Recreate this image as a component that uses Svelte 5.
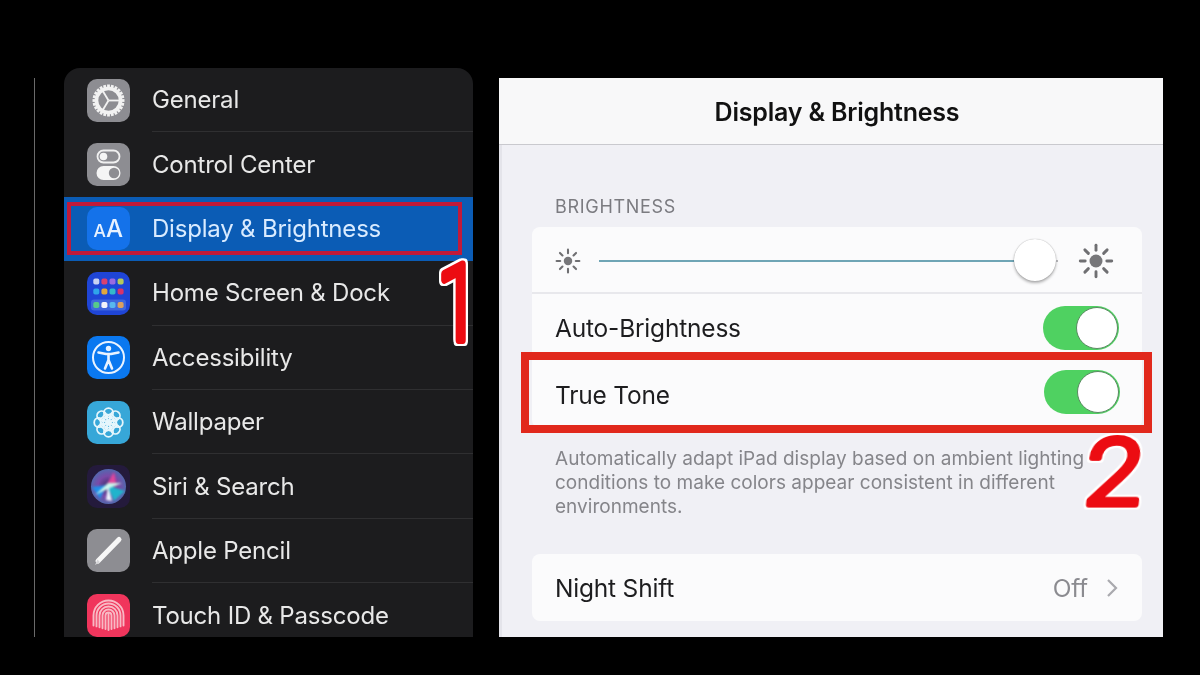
<script>
  const rows = [
    { key: 'general', label: 'General' },
    { key: 'control', label: 'Control Center' },
    { key: 'display', label: 'Display & Brightness', active: true },
    { key: 'home', label: 'Home Screen & Dock' },
    { key: 'access', label: 'Accessibility' },
    { key: 'wallpaper', label: 'Wallpaper' },
    { key: 'siri', label: 'Siri & Search' },
    { key: 'pencil', label: 'Apple Pencil' },
    { key: 'touch', label: 'Touch ID & Passcode' }
  ];
  const teeth = Array.from({ length: 24 }, (_, i) => i * 15);
  const homeDots = [
    ['#c9d2f2', '#d8416f', '#9a6be0', '#b5c95a'],
    ['#2fa4ea', '#e0a63c', '#35b9c9', '#d8336a'],
    ['#57c98a', '#f2f4fa', '#58b7ee', '#dca05f']
  ];
  const homeY = [6.6, 16.6, 30];
  const petals = [0, 45, 90, 135, 180, 225, 270, 315];
  const rays = [0, 45, 90, 135, 180, 225, 270, 315];
  const prints = [3, 6, 9, 12, 15];
</script>

{#snippet sun(size, core)}
  <svg class="sun" width={size} height={size} viewBox="0 0 40 40">
    <circle cx="20" cy="20" r={core} fill="#77777a" />
    {#each rays as r}
      <line x1="20" y1="2.5" x2="20" y2="8" stroke="#6f6f72" stroke-width="3.2" stroke-linecap="round" transform="rotate({r} 20 20)" />
    {/each}
  </svg>
{/snippet}

{#snippet toggle(lifted)}
  <span class="toggle" class:lifted><span class="knob"></span></span>
{/snippet}

{#snippet icon(key)}
  <svg class="icon" viewBox="0 0 43 43" width="43" height="43">
    {#if key === 'general'}
      <rect width="43" height="43" rx="10" fill="#8d8d92" />
      {#each teeth as t}
        <rect x="20.1" y="5.5" width="2.8" height="5" fill="#f2f2f2" transform="rotate({t} 21.5 21.5)" />
      {/each}
      <circle cx="21.5" cy="21.5" r="12" fill="none" stroke="#f2f2f2" stroke-width="3.6" />
      <g stroke="#f2f2f2" stroke-width="1.8">
        <line x1="21.5" y1="21.5" x2="33" y2="21.5" />
        <line x1="21.5" y1="21.5" x2="15.5" y2="11.5" />
        <line x1="21.5" y1="21.5" x2="15.5" y2="31.5" />
      </g>
    {:else if key === 'control'}
      <rect width="43" height="43" rx="10" fill="#8d8d92" />
      <rect x="10.5" y="7.5" width="22" height="12" rx="6" fill="none" stroke="#f0f0f0" stroke-width="1.8" />
      <circle cx="16.5" cy="13.5" r="3.8" fill="#f5f5f5" />
      <rect x="9.5" y="23" width="24" height="14" rx="7" fill="#f5f5f5" />
      <circle cx="27" cy="30" r="5.2" fill="#8d8d92" />
    {:else if key === 'display'}
      <rect width="43" height="43" rx="10" fill="#1472ea" />
      <text class="aa small" x="6.5" y="29.5">A</text>
      <text class="aa" x="19" y="29.5">A</text>
    {:else if key === 'home'}
      <rect width="43" height="43" rx="10" fill="#1f45d6" />
      <rect x="4" y="27.5" width="35" height="11" rx="3" fill="#3f67dd" />
      {#each homeDots as line, y}
        {#each line as c, x}
          <rect x={6.3 + x * 8.1} y={homeY[y]} width="6" height="6" rx="1.8" fill={c} />
        {/each}
      {/each}
    {:else if key === 'access'}
      <rect width="43" height="43" rx="10" fill="#0a78f0" />
      <circle cx="21.5" cy="21.5" r="15.5" fill="none" stroke="#eaf3ff" stroke-width="2" />
      <circle cx="21.5" cy="12.5" r="2.7" fill="#eaf3ff" />
      <path d="M11.5 16.5 L19 18 H24 L31.5 16.5 M21.5 18 V24 M21.5 24 L18 32.5 M21.5 24 L25 32.5" fill="none" stroke="#eaf3ff" stroke-width="2.6" stroke-linecap="round" stroke-linejoin="round" />
    {:else if key === 'wallpaper'}
      <rect width="43" height="43" rx="10" fill="#37a7d8" />
      {#each petals as p}
        <circle cx="21.5" cy="11.8" r="4.6" fill="none" stroke="#e6f6fc" stroke-width="1.8" transform="rotate({p} 21.5 21.5)" />
        <circle cx="21.5" cy="16.2" r="3.4" fill="none" stroke="#e6f6fc" stroke-width="1.6" transform="rotate({p + 22} 21.5 21.5)" />
      {/each}
      <circle cx="21.5" cy="21.5" r="2.6" fill="#e6f6fc" />
    {:else if key === 'siri'}
      <defs>
        <radialGradient id="siriball" cx="50%" cy="50%" r="55%">
          <stop offset="0%" stop-color="#3a2a66" />
          <stop offset="55%" stop-color="#7a4aa8" />
          <stop offset="100%" stop-color="#4a6fb0" />
        </radialGradient>
      </defs>
      <rect width="43" height="43" rx="10" fill="#241a3c" />
      <circle cx="21.5" cy="21.5" r="17.5" fill="url(#siriball)" />
      <g class="siri-glow">
        <path d="M20 19 L27 7 L30 22 Z" fill="#e0479c" />
        <path d="M5 22 L20 20 L13 34 Z" fill="#1f8fe8" />
        <path d="M20 20 L38 26 L27 36 Z" fill="#20b4cc" />
        <path d="M8 30 L21 18 L35 18 L23 23 Z" fill="#c8f7ec" />
        <path d="M21 20 L25 36 L19 35 Z" fill="#f0f6ff" />
      </g>
    {:else if key === 'pencil'}
      <rect width="43" height="43" rx="10" fill="#8d8d92" />
      <path d="M11 32 L32 10.5" fill="none" stroke="#f7f7f7" stroke-width="5" stroke-linecap="round" />
      <path d="M8 36 L10.5 30.5 L13 33.2 Z" fill="#d5d5d8" />
    {:else if key === 'touch'}
      <rect width="43" height="43" rx="10" fill="#f0355c" />
      {#each prints as p}
        <path d="M{21.5 - p} {36 - p * 0.3} V{21.5} A{p} {p} 0 0 1 {21.5 + p} {21.5} V{36 - p * 0.3}" fill="none" stroke="#f8b9c4" stroke-width="1.9" stroke-linecap="round" />
      {/each}
      <line x1="21.5" y1="19" x2="21.5" y2="36" stroke="#f8b9c4" stroke-width="1.9" stroke-linecap="round" />
    {/if}
  </svg>
{/snippet}

<div class="stage">
  <div class="rule"></div>

  <nav class="sidebar">
    {#each rows as row}
      <div class="row" class:active={row.active}>
        {@render icon(row.key)}
        <span class="label">{row.label}</span>
      </div>
    {/each}
    <div class="mark-left"></div>
    <svg class="num one" width="50" height="110" viewBox="0 0 50 110">
      <text class="numtext" x="-2" y="92" transform="scale(0.72 1.02)">1</text>
    </svg>
  </nav>

  <main class="detail">
    <header class="title">Display &amp; Brightness</header>
    <div class="content">
      <div class="section">BRIGHTNESS</div>
      <div class="card">
        <div class="cell slider">
          {@render sun(26, 6.5)}
          <div class="track"><span class="thumb"></span></div>
          {@render sun(36, 7.2)}
        </div>
        <div class="cell"><span>Auto-Brightness</span>{@render toggle(false)}</div>
        <div class="cell"><span>True Tone</span>{@render toggle(true)}</div>
      </div>
      <p class="note">Automatically adapt iPad display based on ambient lighting<br />conditions to make colors appear consistent in different<br />environments.</p>
      <div class="card">
        <div class="cell"><span>Night Shift</span><span class="value">Off<svg class="chev" width="12" height="20" viewBox="0 0 12 20"><path d="M2 2 L10 10 L2 18" fill="none" stroke="#a9a9ae" stroke-width="2.2" /></svg></span></div>
      </div>
    </div>
    <div class="mark-right"></div>
    <svg class="num two" width="70" height="90" viewBox="0 0 70 90">
      <text class="numtext big" x="8" y="70" transform="scale(1.12 1)">2</text>
    </svg>
  </main>
</div>

<style>
  :global(body) {
    margin: 0;
    background: #000;
  }
  .stage {
    width: 1200px;
    height: 675px;
    display: flex;
    align-items: flex-start;
    overflow: hidden;
    background: #000;
    font-family: Inter, "Liberation Sans", sans-serif;
    filter: blur(0.55px);
  }
  .rule {
    width: 1px;
    height: 559px;
    margin: 78px 29px 0 34px;
    background: #6a6a6a;
  }
  .sidebar {
    position: relative;
    width: 409px;
    height: 569px;
    margin-top: 68px;
    background: #1c1c1e;
    border-radius: 16px 16px 0 0;
    overflow: visible;
  }
  .row {
    height: 64.4px;
    display: flex;
    align-items: center;
    padding-left: 23px;
    gap: 22px;
    box-sizing: border-box;
  }
  .icon {
    flex: none;
  }
  .siri-glow {
    filter: blur(0.8px);
  }
  .label {
    flex: 1;
    align-self: stretch;
    display: flex;
    align-items: center;
    font-size: 24px;
    letter-spacing: -0.2px;
    color: #e8e8e8;
    border-bottom: 1px solid #2f2f31;
    white-space: nowrap;
  }
  .row:nth-child(2) .label,
  .row:nth-child(3) .label,
  .row:nth-child(9) .label {
    border-bottom: none;
  }
  .row.active {
    background: #0b5cb5;
  }
  .row.active .label {
    color: #d9ebff;
  }
  .aa {
    font-family: Inter, "Liberation Sans", sans-serif;
    font-size: 24px;
    font-weight: 500;
    fill: #e8f2ff;
  }
  .aa.small {
    font-size: 17.5px;
  }
  .mark-left {
    position: absolute;
    left: 3px;
    top: 134px;
    width: 395px;
    height: 53px;
    box-sizing: border-box;
    border: 4px solid #c01a3a;
  }
  .num {
    position: absolute;
    overflow: visible;
    filter: drop-shadow(2px 0 0 #fff) drop-shadow(-2px 0 0 #fff) drop-shadow(0 2px 0 #fff) drop-shadow(0 -2px 0 #fff);
  }
  .numtext {
    font-family: Roboto, "Liberation Sans", sans-serif;
    font-size: 104px;
    font-weight: 300;
    fill: #ec0c12;
    stroke: #ec0c12;
    stroke-width: 8px;
    stroke-linejoin: round;
  }
  .numtext.big {
    font-size: 92px;
    font-weight: 300;
    stroke-width: 6px;
  }
  .one {
    left: 375px;
    top: 178px;
  }
  .two {
    left: 577px;
    top: 357px;
    transform: skewX(-6deg);
  }
  .detail {
    position: relative;
    width: 664px;
    height: 559px;
    margin: 78px 0 0 26px;
    background: #f0f0f5;
    box-shadow: inset 3px 0 0 #e4e4ea;
    display: flex;
    flex-direction: column;
  }
  .title {
    height: 67px;
    flex: none;
    display: flex;
    align-items: center;
    justify-content: center;
    box-sizing: border-box;
    padding: 2px 0 0 12px;
    background: #f8f8f9;
    border-bottom: 1px solid #c9c9ce;
    font-size: 25px;
    font-weight: 600;
    letter-spacing: -0.2px;
    color: #111;
  }
  .content {
    padding: 0 21px 0 33px;
    display: flex;
    flex-direction: column;
  }
  .section {
    padding: 51px 0 0 23px;
    height: 31px;
    line-height: 22px;
    font-size: 18px;
    letter-spacing: 0.7px;
    color: #7b7b80;
  }
  .card {
    background: #fbfbfc;
    border-radius: 8px;
  }
  .cell {
    height: 67px;
    display: flex;
    align-items: center;
    justify-content: space-between;
    padding: 0 23px;
    font-size: 24.5px;
    letter-spacing: -0.2px;
    color: #1d1d1f;
    box-sizing: border-box;
  }
  .cell.slider {
    border-bottom: 2px solid #e8e8ec;
    padding: 2px 28px 0 23px;
  }
  .sun {
    flex: none;
  }
  .track {
    position: relative;
    flex: 1;
    height: 2px;
    margin: 0 20px 0 18px;
    background: linear-gradient(to right, #6fa5b5 0, #6fa5b5 415px, transparent 415px);
  }
  .track::after {
    content: "";
    position: absolute;
    right: 0;
    top: 0;
    width: 2px;
    height: 2px;
    border-radius: 50%;
    background: #9a9a9e;
  }
  .thumb {
    position: absolute;
    right: 2px;
    top: -21px;
    width: 42px;
    height: 42px;
    border-radius: 50%;
    background: #fff;
    box-shadow: 0 2px 3px rgba(0, 0, 0, 0.3), 0 0 1px rgba(0, 0, 0, 0.35);
  }
  .toggle {
    position: relative;
    display: block;
    width: 76px;
    height: 44px;
    border-radius: 22px;
    background: #4fd161;
  }
  .toggle.lifted {
    margin: 0 -1px 5px 0;
  }
  .knob {
    position: absolute;
    right: 1px;
    top: 1px;
    width: 42px;
    height: 42px;
    box-sizing: border-box;
    border-radius: 50%;
    background: #fff;
    border: 1.5px solid #5a8a62;
  }
  .note {
    margin: 0;
    padding: 19px 23px 35px;
    font-size: 19px;
    line-height: 24px;
    letter-spacing: 0.02px;
    color: #85858a;
    white-space: nowrap;
  }
  .value {
    display: flex;
    align-items: center;
    gap: 18px;
    color: #8b8b90;
  }
  .chev {
    margin-right: 1px;
  }
  .mark-right {
    position: absolute;
    left: 22px;
    top: 274px;
    width: 631px;
    height: 81px;
    box-sizing: border-box;
    border: 8px solid #e1281c;
  }
</style>
